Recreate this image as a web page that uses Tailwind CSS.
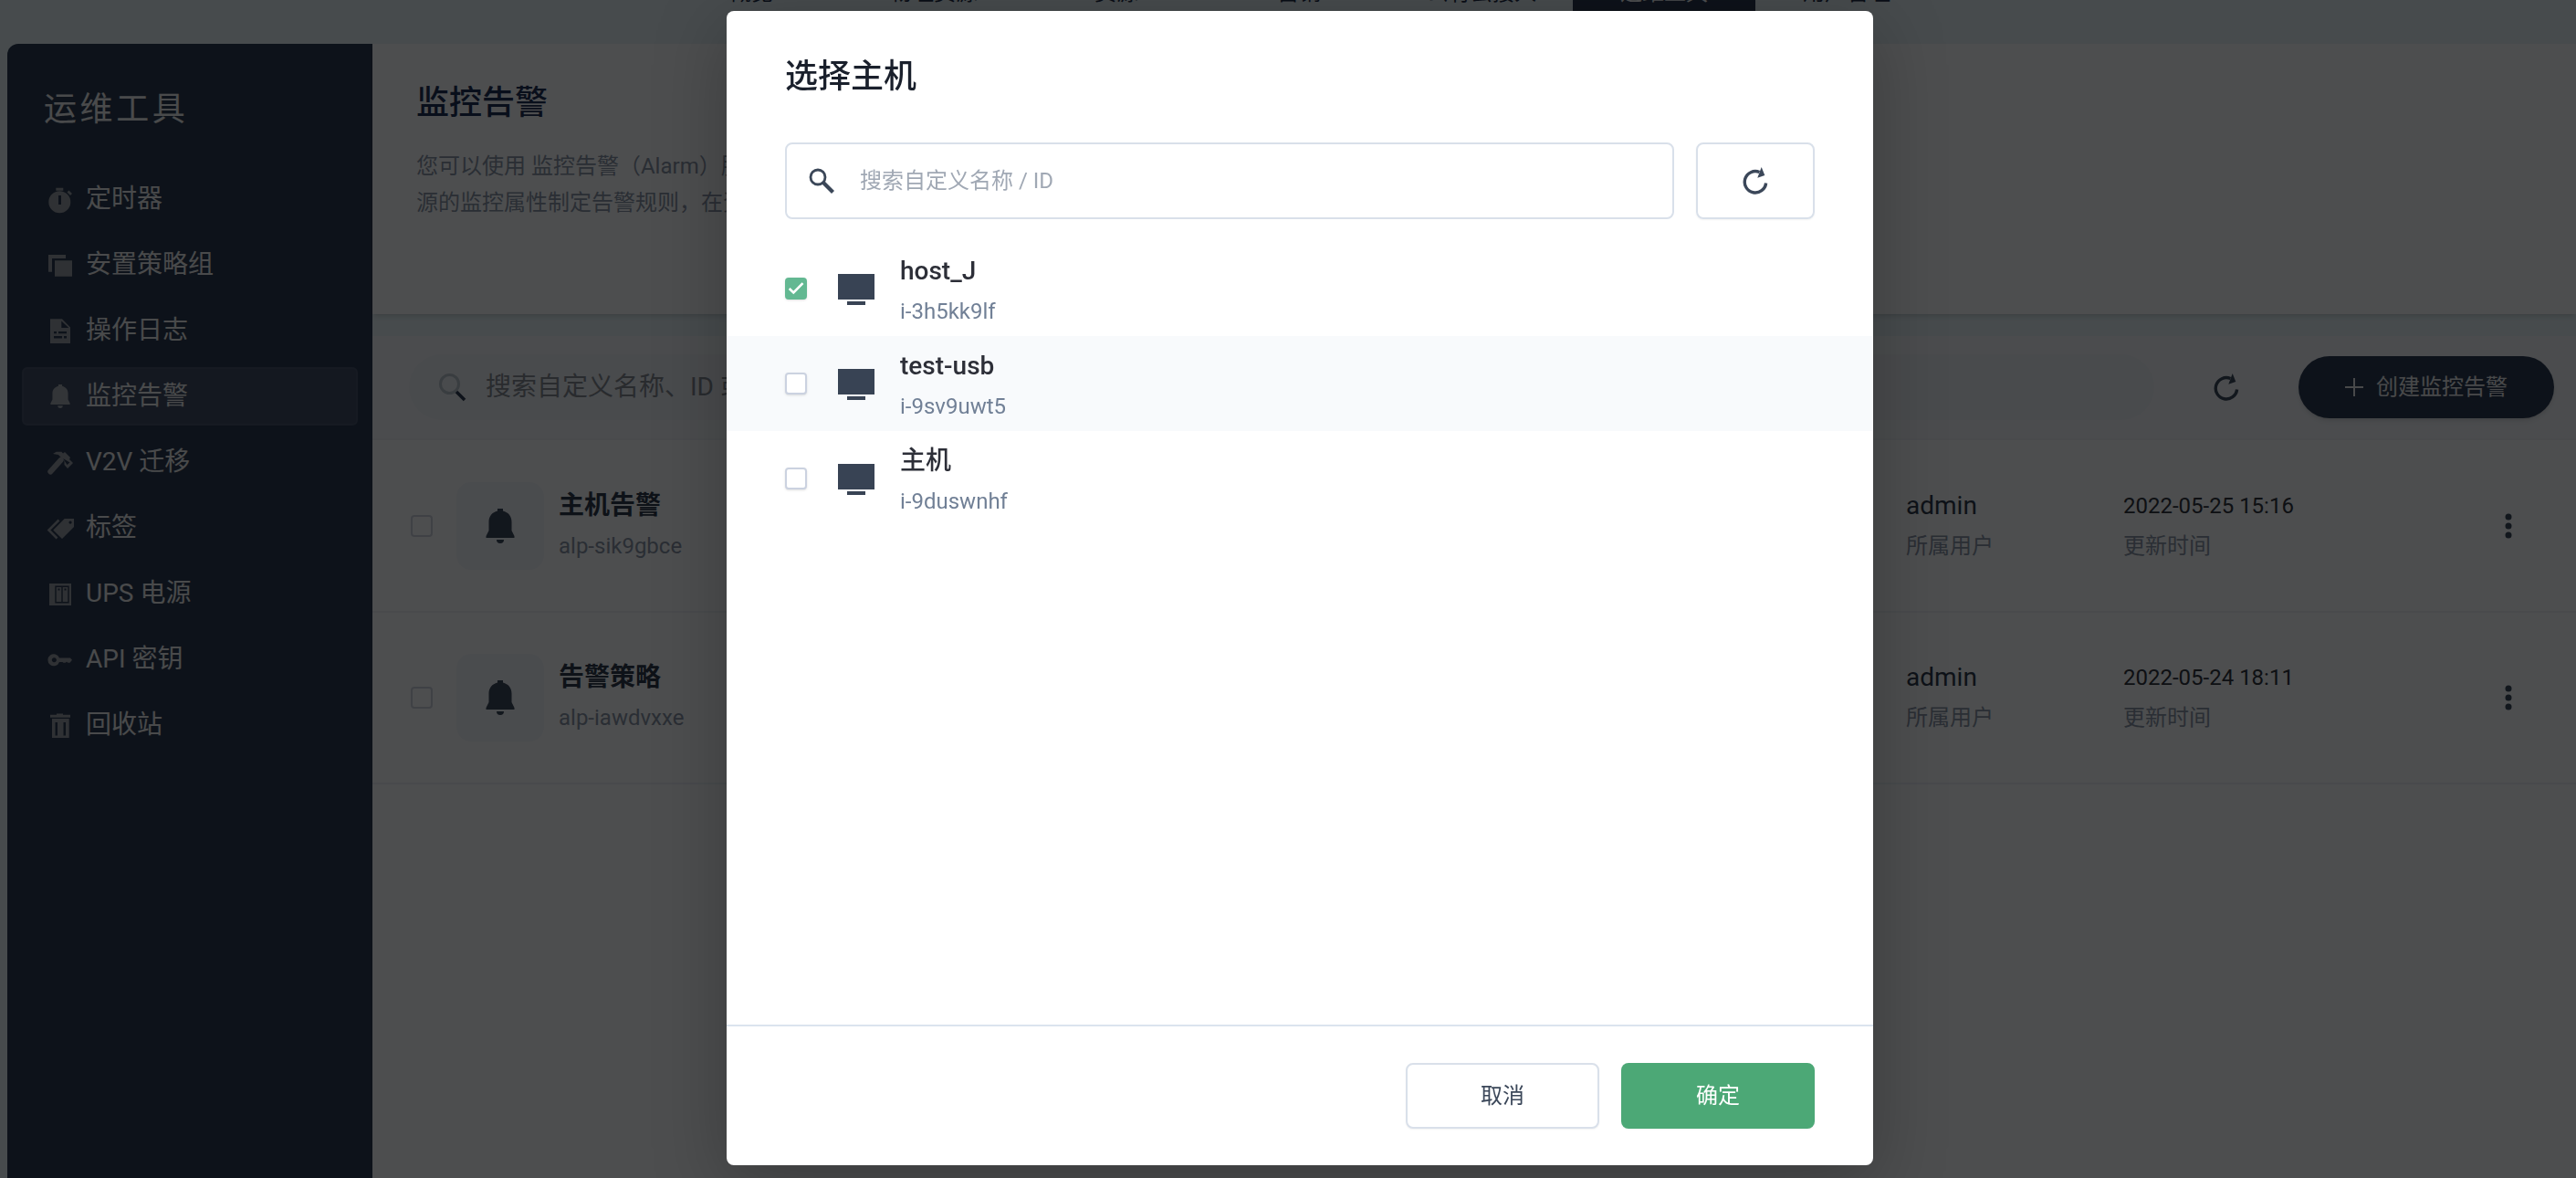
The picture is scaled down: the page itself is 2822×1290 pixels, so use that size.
<!DOCTYPE html>
<html lang="zh-CN">
<head>
<meta charset="utf-8">
<title>监控告警</title>
<script src="https://cdn.jsdelivr.net/npm/@tailwindcss/browser@4"></script>
</head>
<body class="flex h-screen flex-col overflow-hidden bg-[#eaf5f8] font-['Roboto','Noto_Sans_CJK_SC',sans-serif] text-2xl text-[#2d3748]">

<svg class="hidden" aria-hidden="true">
  <symbol id="bell" viewBox="0 0 32 38"><path d="M13 0h6v2.500c6 1.500 9.500 6 9.500 12v9.500l3 6v2H.5v-2l3-6v-9.500c0-6 3.500-10.500 9.500-12z"/><path d="M12 34h8a4 4 0 0 1-8 0z"/></symbol>
  <symbol id="refresh" viewBox="0 0 28 32"><path d="M25.600 18.500A11.700 11.700 0 1 1 18.500 6.500" fill="none" stroke="currentColor" stroke-width="3.400"/><path d="M20.700 1l3.600 9-8 2.700z"/></symbol>
  <symbol id="monitor" viewBox="0 0 40 34"><path d="M0 0h40v28H0zM10 30h20v4H10z"/></symbol>
  <symbol id="dots" viewBox="0 0 8 28"><circle cx="4" cy="4" r="3.500"/><circle cx="4" cy="14" r="3.500"/><circle cx="4" cy="24" r="3.500"/></symbol>
</svg>

<header class="-mt-15 h-27 shrink-0 pl-6">
  <nav class="flex justify-center text-center leading-[104px] text-[#1f2a44]">
    <a href="#" class="w-50">概览</a>
    <a href="#" class="w-50">物理资源</a>
    <a href="#" class="w-50">资源</a>
    <a href="#" class="w-50">营销</a>
    <a href="#" class="w-50">公有云接入</a>
    <a href="#" class="w-50 bg-[#2b384e] text-white">运维工具</a>
    <a href="#" class="w-50">用户管理</a>
  </nav>
</header>

<div class="flex min-h-0 flex-1 pl-2">
  <aside class="w-100 shrink-0 rounded-tl-xl bg-[#2b384e] px-4 text-[28px] text-[#f0f0f0]">
    <h2 class="px-6 pt-[42px] text-4xl leading-[60px] tracking-widest">运维工具</h2>
    <nav class="mt-9 flex flex-col gap-2">
      <a href="#" class="flex h-16 items-center gap-3.5 px-7"><svg class="size-7 shrink-0 overflow-visible text-[#9a9da4]" fill="currentColor" viewBox="0 0 28 28"><path fill-rule="evenodd" d="M13.300 5.300a12 12 0 1 1 0 24a12 12 0 0 1 0-24zM12 10v10h3V10z"/><path d="M9.300 1.700h8v3h-8zM21.500 6.500l2-2 3.500 3.500-2 2z"/></svg>定时器</a>
      <a href="#" class="flex h-16 items-center gap-3.5 px-7"><svg class="size-7 shrink-0 text-[#9a9da4]" fill="currentColor" viewBox="0 0 28 28"><path d="M1 3h19v4H5v14.700H1zM8 9.300h19v17.400H8z"/></svg>安置策略组</a>
      <a href="#" class="flex h-16 items-center gap-3.5 px-7"><svg class="size-7 shrink-0 text-[#9a9da4]" fill="currentColor" viewBox="0 0 28 28"><path fill-rule="evenodd" d="M3 1.300h13L25 10.500V28H3zM15.300 3.500V11h8zM7 15v2.300h3V15zm5 0v2.300h9V15zm-5 5v2.600h9V20zm11 0v2.600h3V20z"/></svg>操作日志</a>
      <a href="#" class="flex h-16 items-center gap-3.5 rounded-md border-2 border-[#48536a] bg-[#404b62] px-[26px]"><svg class="size-7 shrink-0 p-px text-[#a9acb2]" fill="currentColor"><use href="#bell"/></svg>监控告警</a>
      <a href="#" class="flex h-16 items-center gap-3.5 px-7"><svg class="size-7 shrink-0 overflow-visible text-[#9a9da4]" fill="currentColor" viewBox="0 0 28 28"><path d="M3.300 24.500L14.500 12" stroke="currentColor" stroke-width="6" stroke-linecap="round"/><path fill-rule="evenodd" d="M6 5l3.700-2.300h5.600L17 4.500 19 3l6 6-1 2 4 4-6 6-3.500-4v-4L12 6zM17 10l4.500 7 3-2.500z"/></svg>V2V 迁移</a>
      <a href="#" class="flex h-16 items-center gap-3.5 px-7"><svg class="size-7 shrink-0 overflow-visible text-[#9a9da4]" fill="currentColor" viewBox="0 0 28 28"><path fill-rule="evenodd" d="M18.700 4H29v9L16 26l-9.700-9.500zM25 6.500a1.600 1.600 0 1 0 .1 0z"/><path d="M12.500 5.500L1.500 16.500l9 9" fill="none" stroke="currentColor" stroke-width="2.600"/></svg>标签</a>
      <a href="#" class="flex h-16 items-center gap-3.5 px-7"><svg class="size-7 shrink-0 text-[#9a9da4]" fill="currentColor" viewBox="0 0 28 28"><path d="M2 3h24v24H2z"/><path d="M9 6.300h14v17.400H9zM16 6v18" fill="none" stroke="#2b384e" stroke-width="1.400"/><path d="M11.500 8.500h2v2h-2zM18.500 8.500h2v2h-2z" fill="#2b384e"/></svg>UPS 电源</a>
      <a href="#" class="flex h-16 items-center gap-3.5 px-7"><svg class="size-7 shrink-0 text-[#9a9da4]" fill="currentColor" viewBox="0 0 28 28"><path fill-rule="evenodd" d="M13 12.500h12l2 2.300-2.500 3h-2l-1.500-1-1.500 1h-2l-1-.8-3.500 0a6.500 6.500 0 1 1 0-4.500zM7.300 12.200a2.500 2.500 0 1 0 .1 0z"/></svg>API 密钥</a>
      <a href="#" class="flex h-16 items-center gap-3.5 px-7"><svg class="size-7 shrink-0 text-[#9a9da4]" fill="currentColor" viewBox="0 0 28 28"><path fill-rule="evenodd" d="M10 1.500h7v1.200h8v3H3v-3h7zM5 7h18.700v21H5zM8.500 11v14.500H11V11zm9 0v14.500H20V11z"/></svg>回收站</a>
    </nav>
  </aside>

  <main class="flex min-w-0 flex-1 flex-col">
    <section class="h-74 shrink-0 bg-white px-12 pt-10 shadow-md">
      <h1 class="text-4xl leading-[50px] font-medium text-[#1c2c50]">监控告警</h1>
      <p class="mt-6 leading-10 text-[#8b93a5]">您可以使用 监控告警（Alarm）服务针对资<br>源的监控属性制定告警规则，在资源异常时</p>
    </section>
    <section class="mt-6 flex-1 bg-white">
      <div class="flex h-[114px] items-center border-b-2 border-[#f0f2f6] bg-[#f8f9fc] pr-6 pl-10">
        <label class="flex h-18 min-w-0 flex-1 items-center gap-5 rounded-full bg-[#f2f3f7] pl-8">
          <svg class="size-8 shrink-0" fill="none" viewBox="0 0 32 32"><circle cx="12.500" cy="12.500" r="10" stroke="#bcc5cc" stroke-width="3"/><path d="M20 21l9 9" stroke="#2b384e" stroke-width="3.500"/></svg>
          <input type="text" aria-label="搜索" placeholder="搜索自定义名称、ID 或资源" class="min-w-0 flex-1 text-[28px] outline-none placeholder:text-[#858a92]">
        </label>
        <button type="button" aria-label="刷新" class="flex w-[158px] justify-center"><svg class="h-8 w-7 text-[#3b4758]" fill="currentColor"><use href="#refresh"/></svg></button>
        <button type="button" class="flex h-17 w-70 items-center justify-center gap-3.5 rounded-full bg-[#2b384e] text-[#eeeeee] shadow-md"><svg class="size-5" stroke="currentColor" stroke-width="2" viewBox="0 0 20 20"><path d="M10 0v20M0 10h20"/></svg>创建监控告警</button>
      </div>
      <table class="w-full table-fixed border-collapse text-left">
        <colgroup><col class="w-23"><col class="w-28"><col><col class="w-[238px]"><col class="w-[348px]"><col class="w-37"></colgroup>
        <tbody>
          <tr class="h-47 border-b-2 border-[#f0f2f6]">
            <td class="pl-[42px]"><input type="checkbox" aria-label="选择 主机告警" class="block size-6 appearance-none rounded border-2 border-[#d0d3dd] bg-white"></td>
            <td><span class="flex size-24 items-center justify-center rounded-2xl bg-[#f6f7fb]"><svg class="h-[38px] w-8 text-[#3b4758]" fill="currentColor"><use href="#bell"/></svg></span></td>
            <td><div class="text-[28px] leading-11 font-bold">主机告警</div><div class="leading-11 text-[#8b93a5]">alp-sik9gbce</div></td>
            <td><div class="text-[28px] leading-11">admin</div><div class="leading-11 text-[#8b93a5]">所属用户</div></td>
            <td><div class="leading-11 text-[#2d3038]">2022-05-25 15:16</div><div class="leading-11 text-[#8b93a5]">更新时间</div></td>
            <td><button type="button" aria-label="更多" class="mx-auto block"><svg class="h-7 w-2 text-[#3b4758]" fill="currentColor"><use href="#dots"/></svg></button></td>
          </tr>
          <tr class="h-47 border-b-2 border-[#f0f2f6]">
            <td class="pl-[42px]"><input type="checkbox" aria-label="选择 告警策略" class="block size-6 appearance-none rounded border-2 border-[#d0d3dd] bg-white"></td>
            <td><span class="flex size-24 items-center justify-center rounded-2xl bg-[#f6f7fb]"><svg class="h-[38px] w-8 text-[#3b4758]" fill="currentColor"><use href="#bell"/></svg></span></td>
            <td><div class="text-[28px] leading-11 font-bold">告警策略</div><div class="leading-11 text-[#8b93a5]">alp-iawdvxxe</div></td>
            <td><div class="text-[28px] leading-11">admin</div><div class="leading-11 text-[#8b93a5]">所属用户</div></td>
            <td><div class="leading-11 text-[#2d3038]">2022-05-24 18:11</div><div class="leading-11 text-[#8b93a5]">更新时间</div></td>
            <td><button type="button" aria-label="更多" class="mx-auto block"><svg class="h-7 w-2 text-[#3b4758]" fill="currentColor"><use href="#dots"/></svg></button></td>
          </tr>
        </tbody>
      </table>
    </section>
  </main>
</div>

<div class="fixed inset-0 flex justify-center bg-[#020304]/70 pt-3 pb-3.5 pl-[26px]">
  <div role="dialog" aria-modal="true" aria-labelledby="dialog-title" class="flex w-full max-w-[1256px] flex-col rounded-lg bg-white shadow-[0_20px_80px_rgba(0,0,0,0.25)]">
    <h2 id="dialog-title" class="px-16 pt-11 text-4xl leading-[56px] font-medium text-[#1a202c]">选择主机</h2>
    <div class="mt-11 flex gap-6 px-16">
      <label class="flex h-21 min-w-0 flex-1 items-center gap-7 rounded-lg border-2 border-[#d9e0ea] pl-6">
        <svg class="size-7 shrink-0" fill="none" stroke="#3b4758" viewBox="0 0 28 28"><circle cx="10" cy="10" r="8" stroke-width="2.800"/><path d="M15.500 15.500l11 11" stroke-width="4.200"/></svg>
        <input type="text" aria-label="搜索主机" placeholder="搜索自定义名称 / ID" class="min-w-0 flex-1 outline-none placeholder:text-[#a0a8b4]">
      </label>
      <button type="button" aria-label="刷新" class="flex h-21 w-[130px] items-center justify-center rounded-lg border-2 border-[#d9e0ea] shadow-xs"><svg class="h-8 w-7 text-[#3b4759]" fill="currentColor"><use href="#refresh"/></svg></button>
    </div>
    <div class="mt-6 flex-1">
      <label class="flex h-26 items-center px-16">
        <span class="grid shrink-0">
          <input type="checkbox" checked class="col-start-1 row-start-1 size-6 appearance-none rounded bg-[#63b892] shadow-sm">
          <svg class="pointer-events-none col-start-1 row-start-1 size-6" fill="none" stroke="#fff" stroke-width="2.600" viewBox="0 0 24 24"><path d="M4.700 12l4.600 4.500L19.500 6.200"/></svg>
        </span>
        <svg class="mt-0.5 ml-[34px] h-[34px] w-10 shrink-0 text-[#384354]" fill="currentColor"><use href="#monitor"/></svg>
        <span class="ml-7 flex flex-col pt-1.5"><span class="text-[28px] leading-11 font-medium text-[#2d2f38]">host_J</span><span class="leading-11 text-[#718096]">i-3h5kk9lf</span></span>
      </label>
      <label class="flex h-26 items-center bg-[#f8fafc] px-16">
        <input type="checkbox" class="size-6 shrink-0 appearance-none rounded border-2 border-[#cbd2e0] bg-white shadow-sm">
        <svg class="mt-0.5 ml-[34px] h-[34px] w-10 shrink-0 text-[#384354]" fill="currentColor"><use href="#monitor"/></svg>
        <span class="ml-7 flex flex-col pt-1.5"><span class="text-[28px] leading-11 font-medium text-[#2d2f38]">test-usb</span><span class="leading-11 text-[#718096]">i-9sv9uwt5</span></span>
      </label>
      <label class="flex h-26 items-center px-16">
        <input type="checkbox" class="size-6 shrink-0 appearance-none rounded border-2 border-[#cbd2e0] bg-white shadow-sm">
        <svg class="mt-0.5 ml-[34px] h-[34px] w-10 shrink-0 text-[#384354]" fill="currentColor"><use href="#monitor"/></svg>
        <span class="ml-7 flex flex-col pt-1.5"><span class="text-[28px] leading-11 font-medium text-[#2d2f38]">主机</span><span class="leading-11 text-[#718096]">i-9duswnhf</span></span>
      </label>
    </div>
    <footer class="flex justify-end gap-6 border-t-2 border-[#dbe4ee] px-16 py-10">
      <button type="button" class="h-18 w-53 rounded-lg border-2 border-[#d9e0ea] bg-white text-[#3b4759] shadow-xs">取消</button>
      <button type="button" class="h-18 w-53 rounded-lg bg-[#4ca876] text-white shadow-xs">确定</button>
    </footer>
  </div>
</div>
</body>
</html>
